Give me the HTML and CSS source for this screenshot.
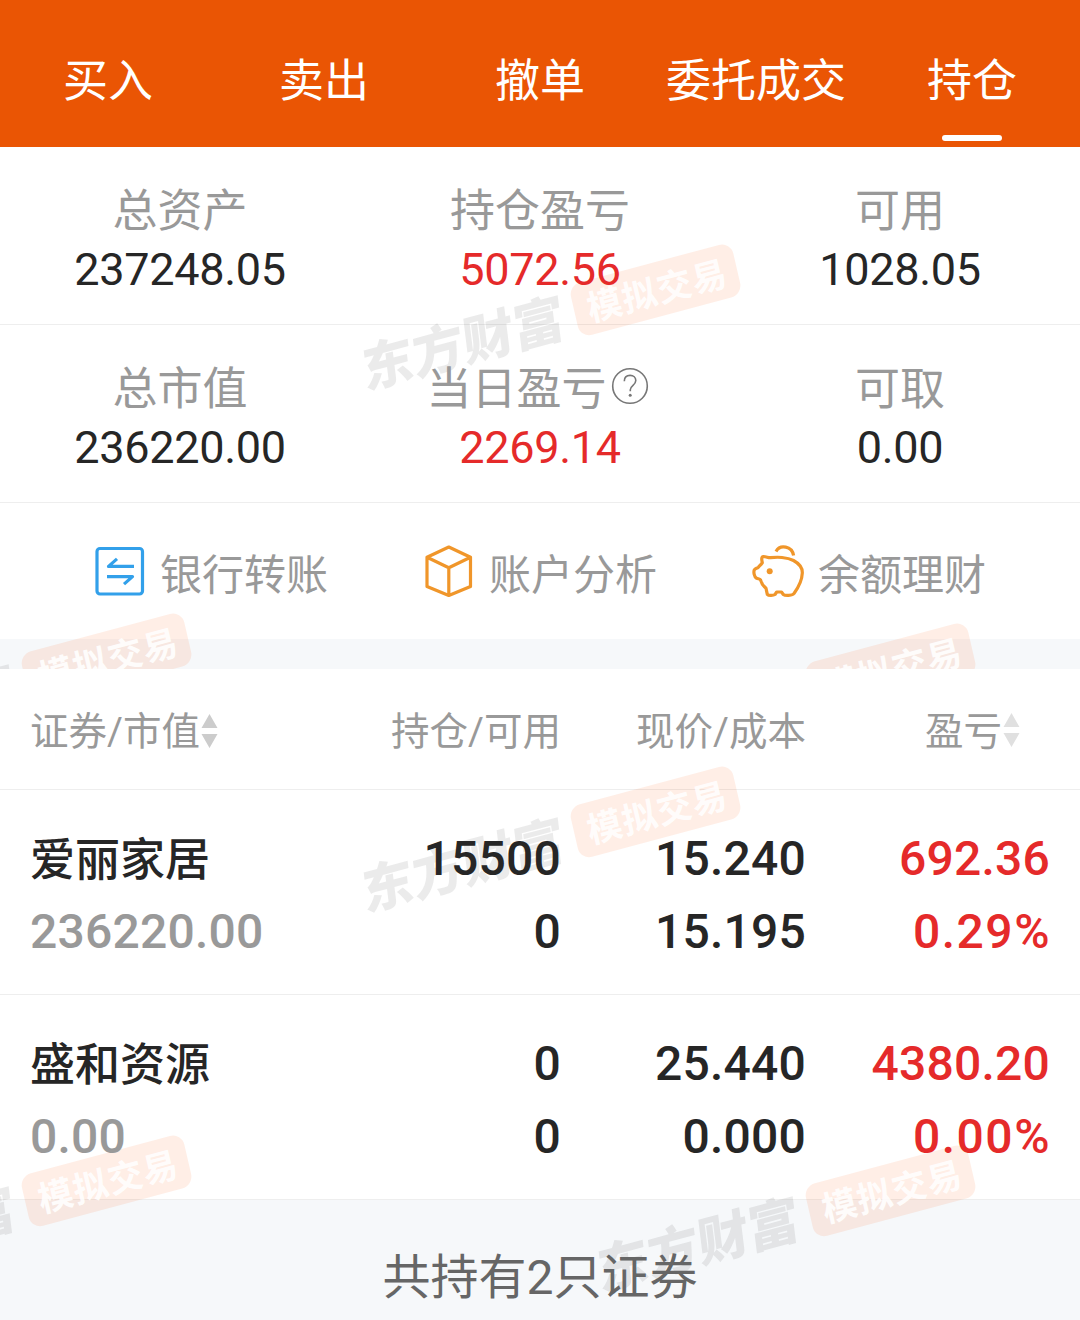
FILE: index.html
```html
<!DOCTYPE html>
<html lang="zh-CN">
<head>
    <meta charset="UTF-8">
    <meta name="viewport" content="width=device-width, initial-scale=1.0">
    <title>持仓</title>
    <link rel="stylesheet" href="styles.css">
</head>
<body>
    <nav class="tabs">
        <a class="tab">买入</a>
        <a class="tab">卖出</a>
        <a class="tab">撤单</a>
        <a class="tab">委托成交</a>
        <a class="tab active">持仓</a>
    </nav>

    <section class="account">
        <div class="summary">
            <div class="summary-item">
                <div class="label">总资产</div>
                <div class="value">237248.05</div>
            </div>
            <div class="summary-item">
                <div class="label">持仓盈亏</div>
                <div class="value up">5072.56</div>
            </div>
            <div class="summary-item">
                <div class="label">可用</div>
                <div class="value">1028.05</div>
            </div>
        </div>
        <div class="summary">
            <div class="summary-item">
                <div class="label">总市值</div>
                <div class="value">236220.00</div>
            </div>
            <div class="summary-item">
                <div class="label">当日盈亏<svg class="help" viewBox="0 0 38 38"><circle cx="19" cy="19" r="17.3"/><path d="M13.3 14.2c0-3.6 2.4-5.8 5.8-5.8s5.7 2.1 5.7 5.2c0 4.6-5.5 4.8-5.5 9.2v1.4"/><circle class="dot" cx="19.2" cy="28.3" r="1.5"/></svg></div>
                <div class="value up">2269.14</div>
            </div>
            <div class="summary-item">
                <div class="label">可取</div>
                <div class="value">0.00</div>
            </div>
        </div>

        <div class="links">
            <a class="link">
                <svg class="icon blue" viewBox="0 0 54 54"><rect x="4" y="4.500" width="45.500" height="45.500" rx="3"/><path d="M41 22.400H15.500l8.500-7.500M14 32.600H39.500l-8.500 7.500"/></svg>
                <span>银行转账</span>
            </a>
            <a class="link">
                <svg class="icon orange" viewBox="0 0 54 54"><path d="M26.800 3l21.700 10.300v29.200L26.800 51.500 5 42.500V13.300zM5 13.300l21.800 10.400 21.700-10.400M26.800 23.700v27.800"/></svg>
                <span>账户分析</span>
            </a>
            <a class="link">
                <svg class="icon orange" viewBox="0 0 54 54"><path d="M12.500 12.500c3 0 4.500 1.400 7 1.200 3.500-.4 7-.7 11.500-.2 4.500.5 8 1.200 11.500 3C48 19.500 51.500 24 51.300 29c-.3 8-4.300 15-8.300 20.500-1.500 2.300-9 2.300-10.700 1l-1.800-2.500h-4.800L24 50.500c-2 1.300-6.500 1.100-7.700-.2l-1.300-6c-2.500-2.200-4.500-4.500-5.500-8.500-.8-1.300-2.500-.8-4-1.600-2.500-1.200-3-6.500-2.200-8.200.5-1.500 2.800-1.600 3.900-2.700 1.500-1.600 2.800-2.800 4.100-4.600-.5-2.200-1.400-6 1.200-6.200z"/><path d="M25 7.500c4-7.500 16-5.500 17.600 4"/><circle class="dot" cx="18.700" cy="27.300" r="3"/></svg>
                <span>余额理财</span>
            </a>
        </div>
        <div class="divider"></div>

        <div class="watermark wm-center"><span class="wm-brand">东方财富</span><span class="wm-badge">模拟交易</span></div>
        <div class="watermark wm-left"><span class="wm-brand">东方财富</span><span class="wm-badge">模拟交易</span></div>
        <div class="watermark wm-right"><span class="wm-brand">东方财富</span><span class="wm-badge">模拟交易</span></div>
    </section>

    <section class="holdings">
        <div class="row head">
            <div>证券/市值<svg class="sort" viewBox="0 0 16 36"><path d="M8 1l8 14H0zM0 21h16L8 35z"/></svg></div>
            <div>持仓/可用</div>
            <div>现价/成本</div>
            <div class="last">盈亏<svg class="sort light" viewBox="0 0 16 36"><path d="M8 1l8 14H0zM0 21h16L8 35z"/></svg></div>
        </div>
        <div class="row">
            <div><p class="name">爱丽家居</p><p class="muted">236220.00</p></div>
            <div><p>15500</p><p>0</p></div>
            <div><p>15.240</p><p>15.195</p></div>
            <div class="up"><p>692.36</p><p class="percent">0.29%</p></div>
        </div>
        <div class="row">
            <div><p class="name">盛和资源</p><p class="muted">0.00</p></div>
            <div><p>0</p><p>0</p></div>
            <div><p>25.440</p><p>0.000</p></div>
            <div class="up"><p>4380.20</p><p class="percent">0.00%</p></div>
        </div>
        <div class="total"><p>共持有2只证券</p></div>

        <div class="watermark wm-center"><span class="wm-brand">东方财富</span><span class="wm-badge">模拟交易</span></div>
        <div class="watermark wm-left"><span class="wm-brand">东方财富</span><span class="wm-badge">模拟交易</span></div>
        <div class="watermark wm-right"><span class="wm-brand">东方财富</span><span class="wm-badge">模拟交易</span></div>
    </section>
</body>
</html>
```
FILE: styles.css
```css
* {
    box-sizing: border-box;
}
body {
    margin: 0;
    width: 1080px;
    height: 1320px;
    overflow: hidden;
    display: flex;
    flex-direction: column;
    background-color: #fff;
    color: #262626;
    font-family: Roboto, "Noto Sans CJK SC", sans-serif;
}
p {
    margin: 0;
}
/* numbers and names stay above the watermark */
p, .label, .value {
    position: relative;
    z-index: 1;
}
.up {
    color: #e52a2a;
}
.muted {
    color: #999;
}

/* top tabs */
.tabs {
    display: grid;
    grid-template-columns: repeat(5, 1fr);
    height: 147px;
    background-color: #ea5504;
    color: #fff;
    font-size: 45px;
}
.tab {
    display: flex;
    flex-direction: column;
    align-items: center;
    justify-content: space-between;
    height: 141px;
    padding-top: 52px;
    line-height: 60px;
}
.tab.active::after {
    content: "";
    width: 60px;
    height: 6px;
    border-radius: 3px;
    background-color: #fff;
}

/* account summary */
.account {
    position: relative;
    height: 522px;
    overflow: hidden;
}
.summary {
    display: grid;
    grid-template-columns: repeat(3, 1fr);
    height: 178px;
    padding-top: 33px;
    border-bottom: 1px solid #eee;
    text-align: center;
}
.label {
    display: flex;
    justify-content: center;
    align-items: center;
    height: 60px;
    padding-top: 4px;
    line-height: 60px;
    font-size: 45px;
    color: #999;
}
.value {
    line-height: 60px;
    font-size: 45px;
    letter-spacing: -0.3px;
}
.help {
    width: 38px;
    height: 38px;
    margin: -9px 5px 0 4px;
    fill: none;
    stroke: #777;
    stroke-width: 1.6;
}
.help .dot {
    fill: #777;
    stroke: none;
}
.links {
    display: grid;
    grid-template-columns: repeat(3, 329px);
    justify-content: center;
    height: 136px;
    font-size: 42px;
    color: #999;
}
.link {
    display: flex;
    align-items: center;
    justify-content: center;
    gap: 14px;
}
.link span {
    margin-left: -1px;
    padding-top: 1px;
}
.icon {
    width: 54px;
    height: 54px;
    margin-top: -1px;
    margin-left: -1px;
    fill: none;
    stroke-width: 3.2;
    stroke-linejoin: round;
}
.blue {
    stroke: #32a0ea;
}
.orange {
    stroke: #f0962a;
}
.icon .dot {
    fill: #f0962a;
    stroke: none;
}
.divider {
    height: 30px;
    background-color: #f6f8fa;
}

/* holdings list */
.holdings {
    position: relative;
    flex: 1;
    overflow: hidden;
    display: flex;
    flex-direction: column;
}
.row {
    display: grid;
    grid-template-columns: 291px 240px 245px 244px;
    height: 205px;
    padding: 32px 30px 0;
    border-bottom: 1px solid #eee;
    font-size: 48px;
    font-weight: 500;
    line-height: 73px;
    letter-spacing: 0.2px;
    text-align: right;
}
.row > :first-child {
    text-align: left;
}
.name {
    height: 73px;
    padding-top: 2px;
    font-size: 45px;
    letter-spacing: 0;
}
.percent {
    letter-spacing: 1.5px;
    margin-right: -1px;
}
.head {
    height: 121px;
    padding-top: 26px;
    font-size: 38.5px;
    font-weight: 400;
    letter-spacing: 0;
    color: #999;
}
.head .last {
    padding-right: 30px;
}
.sort {
    width: 17px;
    height: 36px;
    margin-left: 1px;
    vertical-align: -4px;
    fill: #ccc;
}
.sort.light {
    vertical-align: -3px;
    fill: #e0e0e0;
}
.total {
    flex: 1;
    padding-top: 42px;
    background-color: #f6f8fa;
    font-size: 48px;
    line-height: 72px;
    text-align: center;
    color: #666;
}

/* slanted watermark over both sections */
.watermark {
    position: absolute;
    display: flex;
    align-items: center;
    width: 390px;
    height: 56px;
    white-space: nowrap;
    pointer-events: none;
    transform: rotate(-15deg);
}
.wm-center {
    left: 363px;
    top: 141px;
}
.wm-left {
    left: -186px;
    top: 510px;
}
.wm-right {
    left: 598px;
    top: 520px;
}
.wm-brand {
    width: 212px;
    font-size: 52px;
    font-weight: 900;
    line-height: 56px;
    color: rgba(60, 60, 60, 0.1);
    transform: translate(-8px, 4px) skewX(-8deg);
}
.wm-badge {
    width: 168px;
    height: 54px;
    border-radius: 12px;
    background-color: rgba(255, 98, 30, 0.11);
    color: rgba(255, 255, 255, 0.9);
    font-size: 35px;
    font-weight: 700;
    line-height: 59px;
    letter-spacing: 1px;
    text-indent: 3px;
    text-align: center;
    transform: skewX(-2deg);
}
```
